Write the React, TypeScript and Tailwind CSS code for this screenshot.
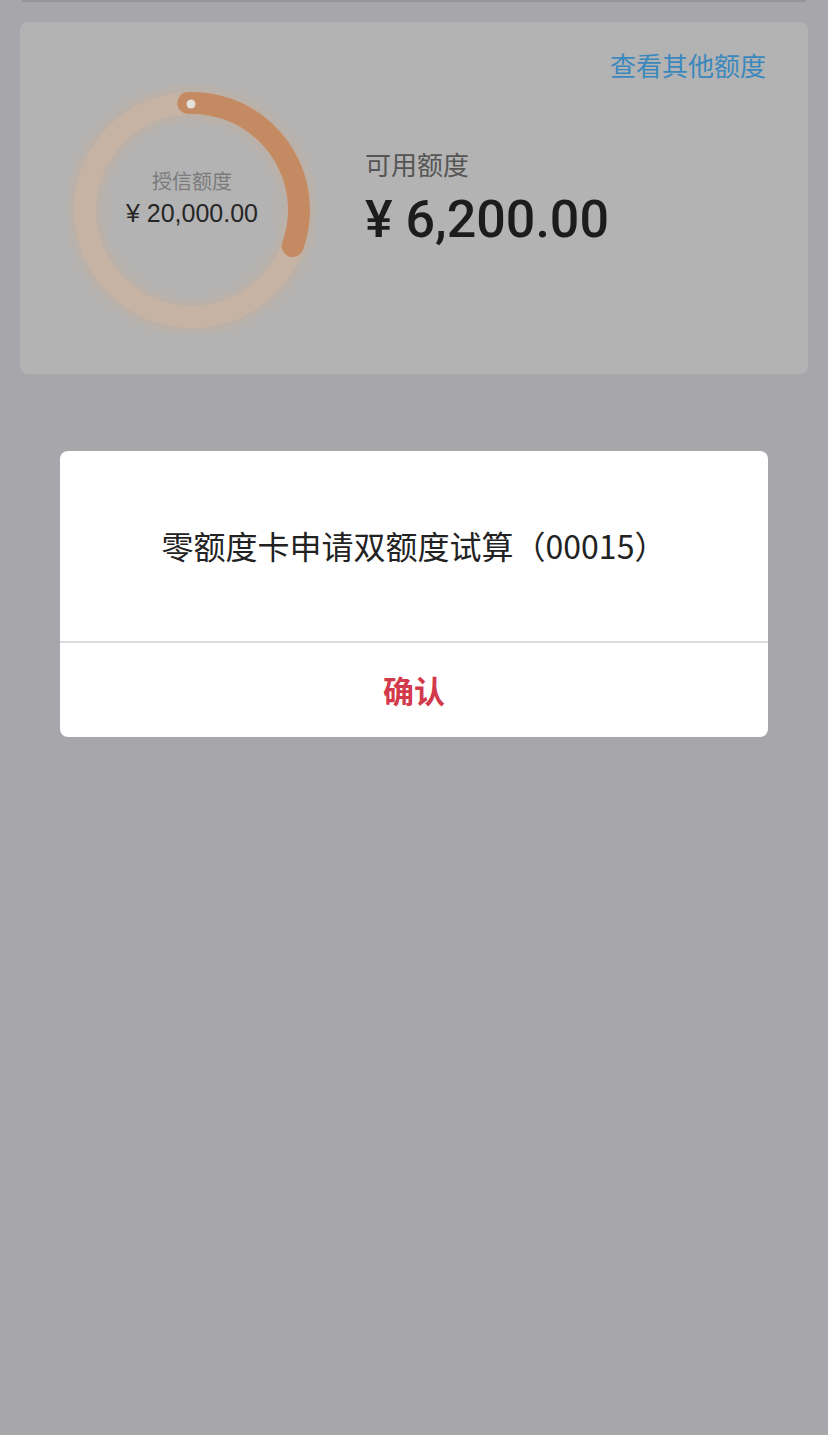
import React from "react";

const cjk = { fontFamily: '"Liberation Sans", "Noto Sans CJK SC", sans-serif' };
const cjkOnly = { fontFamily: '"Noto Sans CJK SC", sans-serif' };

function QuotaRing() {
  // 6,200 of 20,000 -> 31%
  const r = 107;
  const c = 2 * Math.PI * r;
  const pct = 0.31;
  return (
    <div className="relative w-[250px] h-[250px] shrink-0">
      <svg width="250" height="250" viewBox="0 0 250 250" className="absolute inset-0">
        <defs>
          <filter id="glow" x="-30%" y="-30%" width="160%" height="160%">
            <feGaussianBlur stdDeviation="6" />
          </filter>
        </defs>
        <circle cx="125" cy="125" r={r} fill="none" stroke="#c7ae9a" strokeWidth="30" opacity="0.6" filter="url(#glow)" />
        <circle cx="125" cy="125" r={r} fill="none" stroke="#c6b3a4" strokeWidth="22" />
        <circle
          cx="125"
          cy="125"
          r={r}
          fill="none"
          stroke="#c48b63"
          strokeWidth="22"
          strokeLinecap="round"
          strokeDasharray={`${c * pct} ${c}`}
          transform="rotate(-92 125 125)"
        />
        <circle cx="124" cy="19" r="4.5" fill="#e6e0dc" />
      </svg>
      <div className="absolute inset-0 flex flex-col items-center justify-center pb-[24px]">
        <span className="text-[20px] leading-[26px] text-[#7b7b7b]" style={cjk}>
          授信额度
        </span>
        <span className="text-[25px] leading-[30px] text-[#262626] mt-[3px]" style={cjk}>
          ¥ 20,000.00
        </span>
      </div>
    </div>
  );
}

export default function App() {
  return (
    <div className="relative w-[828px] h-[1435px] bg-[#a7a6ab] overflow-hidden" style={cjk}>
      {/* header edge */}
      <div className="mx-[22px] h-[2px] bg-[#96959a]" />

      {/* quota card */}
      <div className="mx-[20px] mt-[20px] h-[352px] rounded-[8px] bg-[#b3b3b3]">
        <div className="flex justify-end pr-[42px] pt-[29px]">
          <span className="text-[26px] leading-[32px] text-[#3a88bd]">查看其他额度</span>
        </div>
        <div className="flex items-center pl-[47px] mt-[2px]">
          <QuotaRing />
          <div className="ml-[48px] flex flex-col -mt-[22px]">
            <span className="text-[26px] leading-[32px] text-[#555555]">可用额度</span>
            <span
              className="text-[52px] leading-[56px] font-medium text-[#1c1c1c] mt-[10px]"
              style={{ fontFamily: 'Roboto, "Liberation Sans", sans-serif' }}
            >
              ¥ 6,200.00
            </span>
          </div>
        </div>
      </div>

      {/* modal */}
      <div className="mx-[60px] mt-[77px] rounded-[8px] bg-white overflow-hidden">
        <div className="h-[190px] flex items-center justify-center">
          <p className="text-[32px] leading-[40px] text-[#222222] pb-[2px]" style={cjkOnly}>
            零额度卡申请双额度试算（00015）
          </p>
        </div>
        <div className="h-[2px] bg-[#dcdcde]" />
        <button
          className="w-full h-[94px] flex items-center justify-center text-[31px] font-bold text-[#d23a4b]"
          style={cjkOnly}
        >
          确认
        </button>
      </div>
    </div>
  );
}
